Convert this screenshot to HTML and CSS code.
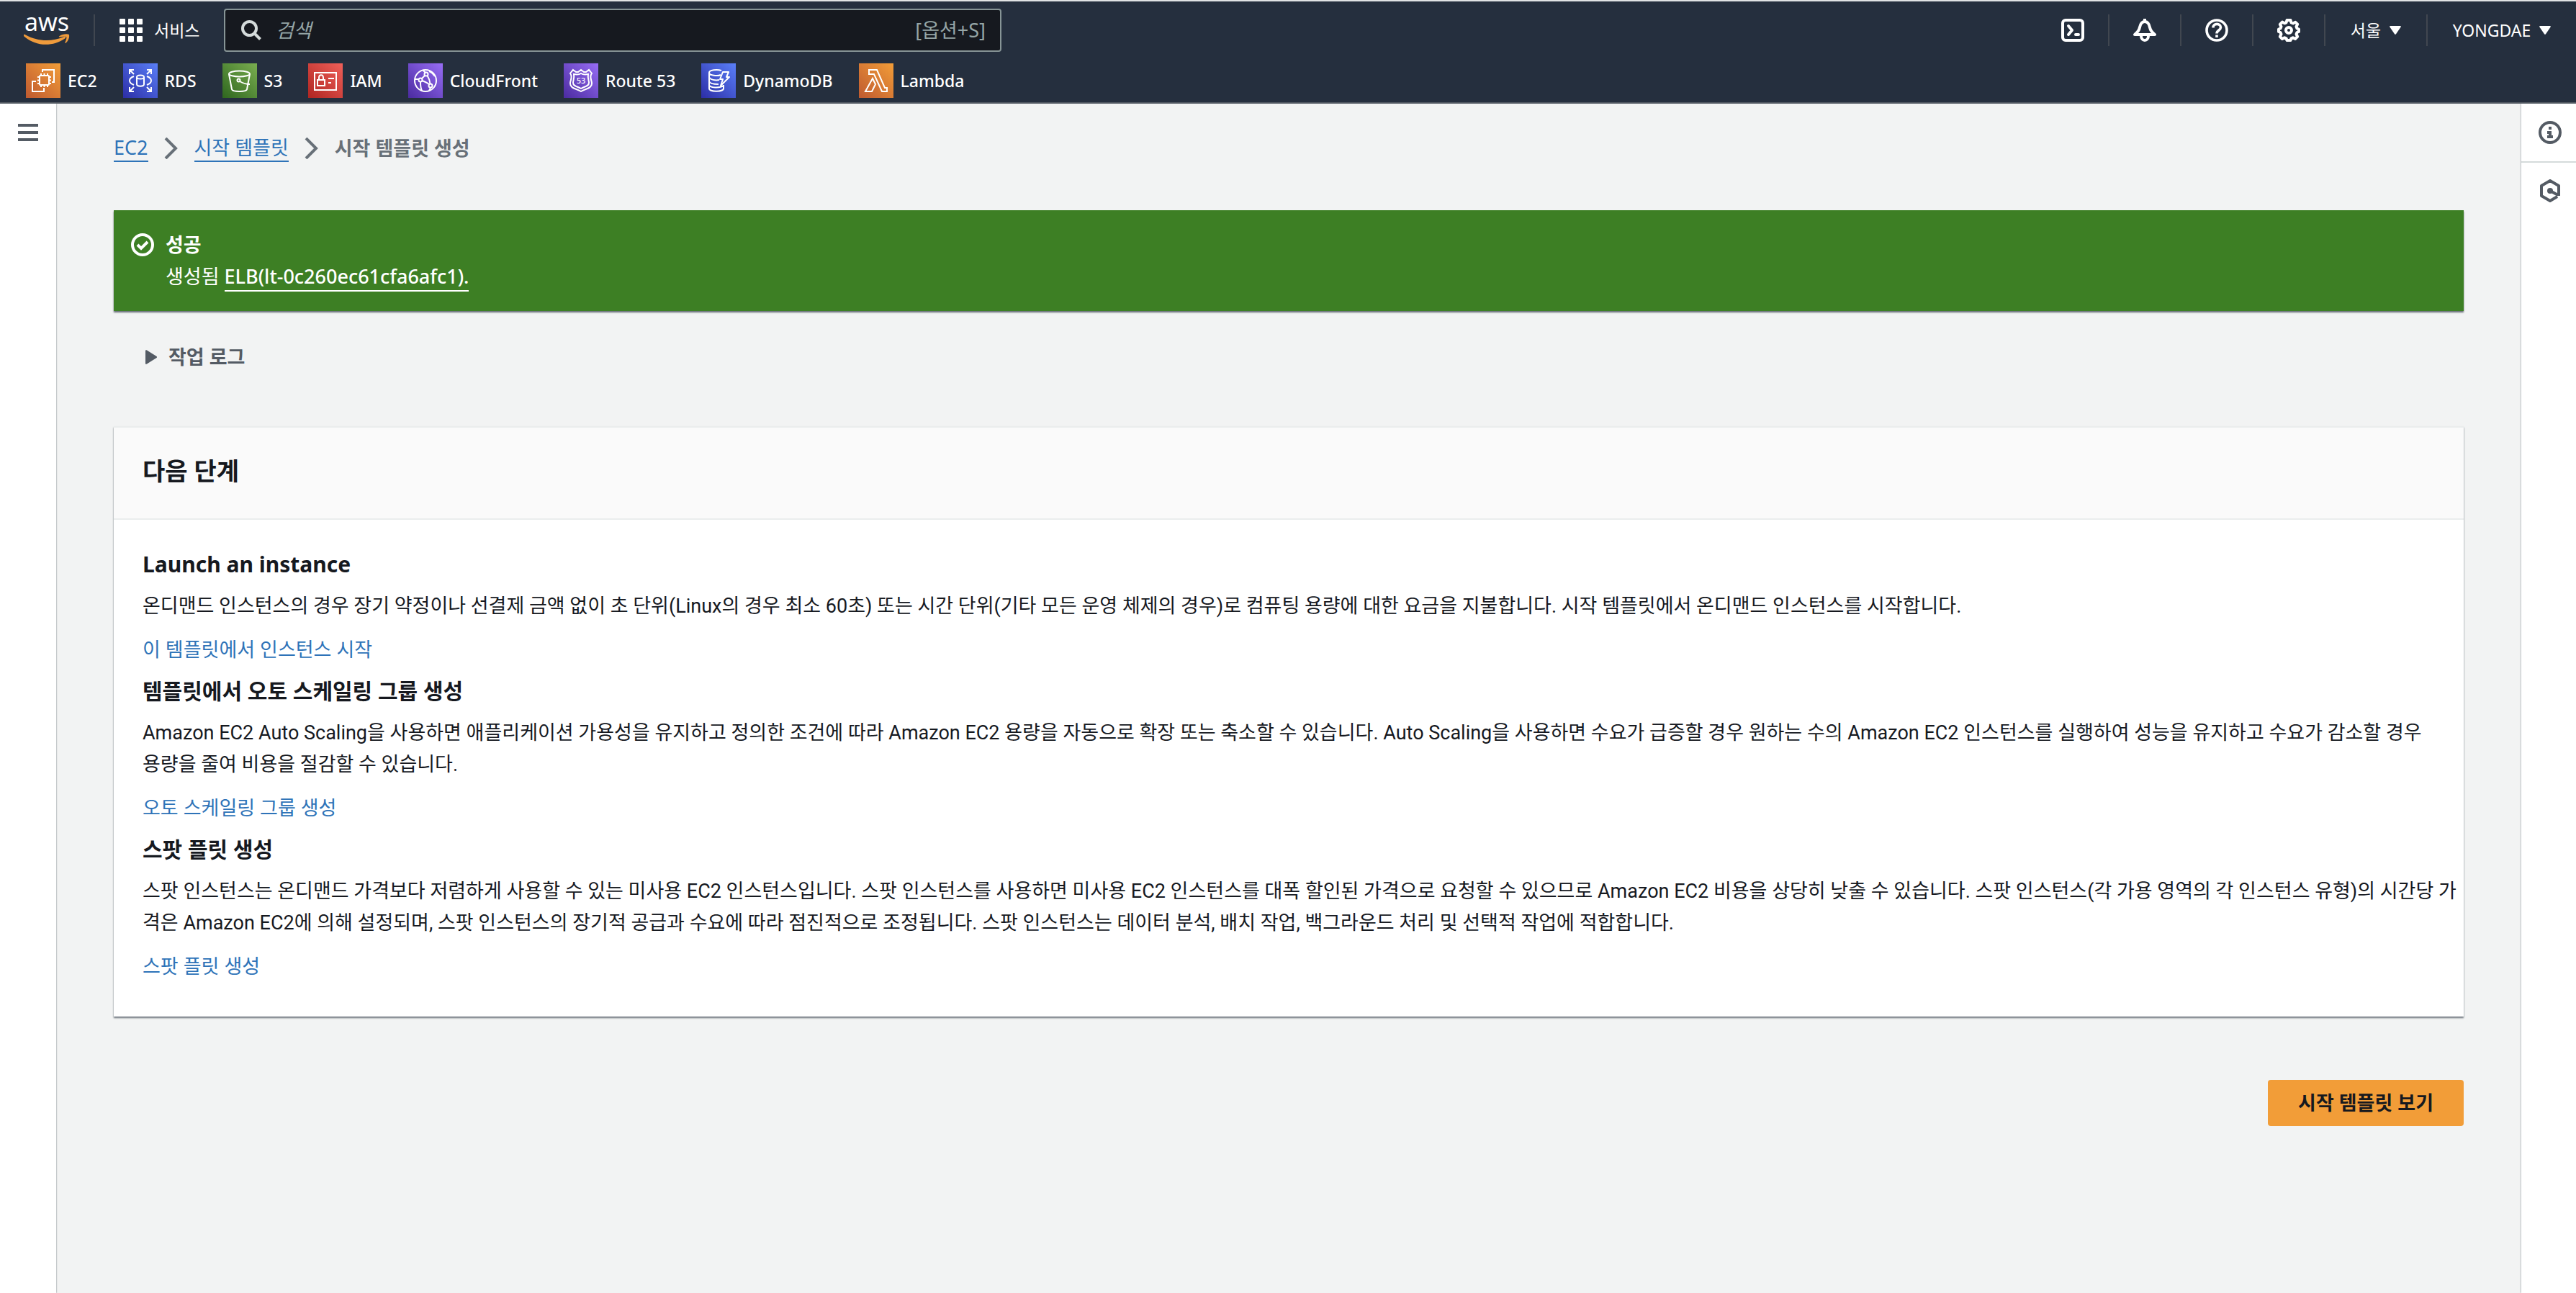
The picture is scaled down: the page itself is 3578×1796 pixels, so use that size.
FILE: index.html
```html
<!DOCTYPE html>
<html lang="ko">
<head>
<meta charset="utf-8">
<meta name="viewport" content="width=device-width, initial-scale=1">
<title>시작 템플릿 생성</title>
<link rel="stylesheet" href="styles.css">
</head>
<body>
<svg class="defs" width="0" height="0" aria-hidden="true">
  <defs>
    <linearGradient id="orange" x1="0" y1="1" x2="1" y2="0"><stop offset="0" stop-color="#bf5a30"/><stop offset="1" stop-color="#f29d38"/></linearGradient>
    <linearGradient id="blue" x1="0" y1="1" x2="1" y2="0"><stop offset="0" stop-color="#2c2ea6"/><stop offset="1" stop-color="#5a7ff8"/></linearGradient>
    <linearGradient id="green" x1="0" y1="1" x2="1" y2="0"><stop offset="0" stop-color="#2f671f"/><stop offset="1" stop-color="#7aae50"/></linearGradient>
    <linearGradient id="red" x1="0" y1="1" x2="1" y2="0"><stop offset="0" stop-color="#af2521"/><stop offset="1" stop-color="#ef6059"/></linearGradient>
    <linearGradient id="purple" x1="0" y1="1" x2="1" y2="0"><stop offset="0" stop-color="#4b2ba0"/><stop offset="1" stop-color="#976df5"/></linearGradient>
  </defs>
</svg>

<header class="topnav">
  <div class="bar">
    <a class="logo" href="#" aria-label="aws">
      <span class="logo-text">aws</span>
      <svg class="logo-smile" viewBox="0 0 64 16" fill="#ef9b3c"><path d="M0 2C0 1 1 .5 2 1.200C19 10.500 38 11.500 56 4c2-.8 3 1 1.500 2.200C40 18.500 17 17.500 1 4 .3 3.500 0 3 0 2z"/><path d="M49 3.500C53 .5 60-.5 62.500.8c1.500 1.200.5 8-3.800 11.800-.8.700-1.700.3-1.300-.7C58.500 9.500 60 5.500 59.200 4.400 58.400 3.300 53.500 3.900 50.500 4.400c-1.500.2-2-.5-1.500-.9z"/></svg>
    </a>
    <button class="services" type="button">
      <svg class="icon" viewBox="0 0 32 32" fill="#fff"><rect width="8" height="8" rx="1"/><rect x="12" width="8" height="8" rx="1"/><rect x="24" width="8" height="8" rx="1"/><rect y="12" width="8" height="8" rx="1"/><rect x="12" y="12" width="8" height="8" rx="1"/><rect x="24" y="12" width="8" height="8" rx="1"/><rect y="24" width="8" height="8" rx="1"/><rect x="12" y="24" width="8" height="8" rx="1"/><rect x="24" y="24" width="8" height="8" rx="1"/></svg>
      <span>서비스</span>
    </button>
    <label class="search">
      <svg class="search-icon" viewBox="0 0 28 28" fill="none" stroke="#d5dbdb" stroke-width="4"><circle cx="11.500" cy="11.500" r="9.500"/><path d="M18 18l8.500 8.500"/></svg>
      <input type="search" placeholder="검색" aria-label="검색">
      <span>[옵션+S]</span>
    </label>
    <div class="tools">
      <button class="tool" type="button" aria-label="CloudShell">
        <svg class="icon" viewBox="0 0 32 32" fill="none" stroke="#fff" stroke-width="4" stroke-linecap="round" stroke-linejoin="round"><rect x="2" y="2" width="28" height="28" rx="4"/><path d="M10 10l5 6-5 6M20 22h4"/></svg>
      </button>
      <button class="tool" type="button" aria-label="알림">
        <svg class="icon" viewBox="0 0 32 32" fill="none" stroke="#fff" stroke-width="4" stroke-linejoin="round"><path d="M16 0v4M2 22c4-3 6-5 7-10 1-5 3-8 7-8s6 3 7 8c1 5 3 7 7 10z"/><path d="M11 24c0 8 10 8 10 0"/></svg>
      </button>
      <button class="tool" type="button" aria-label="도움말">
        <svg class="icon" viewBox="0 0 32 32" fill="none" stroke="#fff" stroke-width="3.600"><circle cx="16" cy="16" r="14"/><path d="M11 12.500c0-7 10.500-6.500 10.500-.5 0 4-5.500 4-5.500 8.500M16 22.500v3.500"/></svg>
      </button>
      <button class="tool" type="button" aria-label="설정">
        <svg class="icon" viewBox="0 0 32 32" fill="none" stroke="#fff" stroke-width="4" stroke-linejoin="round"><path d="M13.500 2h5l1 3.500 2.500 1 3.300-1.700 2.900 2.900L26.500 11l1 2.500 2.500 1v3.500l-2.500 1-1 2.500 1.700 3.300-3.200 3.200-3.200-1.700-2.300 1-1 2.700h-5l-1-2.700-2.300-1L7 28l-3.200-3.200L5.500 21.500l-1-2.500L2 18v-3.500l2.500-1 1-2.500-1.700-3.200L7 4.600l3.200 1.700 2.300-1z"/><circle cx="16" cy="16" r="4"/></svg>
      </button>
      <button class="tool region" type="button"><span>서울</span><svg class="caret" viewBox="0 0 16 12" fill="#fff"><path d="M1 0h14c1 0 1 1 .5 1.800L9 11.200c-.5.800-1.500.8-2 0L.5 1.800C0 1 0 0 1 0z"/></svg></button>
      <button class="tool account" type="button"><span>YONGDAE</span><svg class="caret" viewBox="0 0 16 12" fill="#fff"><path d="M1 0h14c1 0 1 1 .5 1.800L9 11.200c-.5.800-1.500.8-2 0L.5 1.800C0 1 0 0 1 0z"/></svg></button>
    </div>
  </div>
  <nav class="favorites" aria-label="즐겨찾기">
    <a href="#"><svg class="service" viewBox="0 0 48 48"><rect width="48" height="48" fill="url(#orange)"/><g fill="none" stroke="#fff" stroke-width="2"><rect x="19" y="17" width="13" height="13" rx="1"/><path d="M21 17v-3M25.500 17v-3M30 17v-3M21 33v-3M25.500 33v-3M30 33v-3M16 19h3M16 23.500h3M16 28h3M32 19h3M32 23.500h3M32 28h3M23 12V9h16v17h-3M14 25H9v14h16v-5"/></g></svg><span>EC2</span></a>
    <a href="#"><svg class="service" viewBox="0 0 48 48"><rect width="48" height="48" fill="url(#blue)"/><g fill="none" stroke="#fff" stroke-width="2"><ellipse cx="24" cy="19" rx="5" ry="2.500"/><path d="M19 19v10c0 3.500 10 3.500 10 0V19M9 15V9h6M9 9l6 6M33 9h6v6M39 9l-6 6M9 33v6h6M9 39l6-6M33 39h6v-6M39 39l-6-6M15 18c-8 3-8 9 0 12M33 18c8 3 8 9 0 12"/></g></svg><span>RDS</span></a>
    <a href="#"><svg class="service" viewBox="0 0 48 48"><rect width="48" height="48" fill="url(#green)"/><g fill="none" stroke="#fff" stroke-width="2"><ellipse cx="23.500" cy="14.500" rx="14.500" ry="4"/><path d="M9 15l4 21c1 4 20 4 21 0l4-21M24 25c5 3 10 4 14 4"/><circle cx="22.500" cy="23.500" r="2"/></g></svg><span>S3</span></a>
    <a href="#"><svg class="service" viewBox="0 0 48 48"><rect width="48" height="48" fill="url(#red)"/><g fill="none" stroke="#fff" stroke-width="2"><rect x="9" y="13" width="30" height="24"/><rect x="13" y="23" width="10" height="8"/><path d="M15 23v-3c0-5 6-5 6 0v3M28 21h8M28 27h4"/></g></svg><span>IAM</span></a>
    <a href="#"><svg class="service" viewBox="0 0 48 48"><rect width="48" height="48" fill="url(#purple)"/><g fill="none" stroke="#fff" stroke-width="2"><circle cx="24" cy="24" r="15"/><circle cx="25" cy="15" r="2.500"/><circle cx="17" cy="23" r="2.500"/><circle cx="31" cy="31" r="2.500"/><path d="M23 17l-4 4M26.500 17c2 3 3.500 7 4 11.500M19 24c4 1 7 3 10 5M9.500 22h5M17 26c0 4 0 8 2 12M21 10l3 3M31 34l-2 4M29 11c3 1 6 4 8 7"/></g></svg><span>CloudFront</span></a>
    <a href="#"><svg class="service" viewBox="0 0 48 48"><rect width="48" height="48" fill="url(#purple)"/><g fill="none" stroke="#fff" stroke-width="2"><path d="M13 9l4 3h3l4-3 4 3h3l4-3 4 5c-4 5 0 9 0 14 0 7-9 7-15 11-6-4-15-4-15-11 0-5 4-9 0-14z"/><path d="M14 15c5 1 7 1 10-1 3 2 5 2 10 1-1 5 1 9 1 12 0 5-6 5-11 8-5-3-11-3-11-8 0-3 2-7 1-12z"/></g><text class="shield-number" x="24" y="28" text-anchor="middle">53</text></svg><span>Route 53</span></a>
    <a href="#"><svg class="service" viewBox="0 0 48 48"><rect width="48" height="48" fill="url(#blue)"/><g fill="none" stroke="#fff" stroke-width="2" stroke-linejoin="round"><path d="M28 10c-6-2-17-1-17 3 0 4 12 5 16 3M11 13v22c0 5 20 5 20 0v-5M11 19c1 4 9 5 14 4M11 25c1 4 9 4 13 4M11 30c1 4 14 5 20 1M11 13c0 2 2 3 4 3M30 12h8l-3 7h4L27 31l3-9h-4z"/></g></svg><span>DynamoDB</span></a>
    <a href="#"><svg class="service" viewBox="0 0 48 48"><rect width="48" height="48" fill="url(#orange)"/><path d="M14 9h11l11 25h3v5h-7L21 15h-7zM19 21l4 8-5 10H9z" fill="none" stroke="#fff" stroke-width="2"/></svg><span>Lambda</span></a>
  </nav>
</header>

<div class="layout">
  <aside class="rail">
    <button type="button" aria-label="메뉴"><svg class="menu-icon" viewBox="0 0 28 24" fill="#545b64"><path d="M0 0h28v4H0zM0 10h28v4H0zM0 20h28v4H0z"/></svg></button>
  </aside>

  <main class="content">
    <nav class="breadcrumb" aria-label="위치">
      <a href="#">EC2</a>
      <svg class="chevron" viewBox="0 0 20 30" fill="none" stroke="#687078" stroke-width="4"><path d="M2 1l14 14L2 29"/></svg>
      <a href="#">시작 템플릿</a>
      <svg class="chevron" viewBox="0 0 20 30" fill="none" stroke="#687078" stroke-width="4"><path d="M2 1l14 14L2 29"/></svg>
      <strong>시작 템플릿 생성</strong>
    </nav>

    <section class="alert" role="status">
      <svg class="icon" viewBox="0 0 32 32" fill="none" stroke="#fff" stroke-width="4"><circle cx="16" cy="16" r="14"/><path d="M9 16l5 5 9-9"/></svg>
      <div>
        <strong>성공</strong>
        <p>생성됨 <a href="#">ELB(lt-0c260ec61cfa6afc1).</a></p>
      </div>
    </section>

    <button class="log-toggle" type="button" aria-expanded="false">
      <svg class="triangle" viewBox="0 0 16 20" fill="#545b64"><path d="M0 1c0-1 1-1 2-.5L15.500 9c.7.600.7 1.400 0 2L2 19.500c-1 .5-2 .5-2-.5z"/></svg>
      <span>작업 로그</span>
    </button>

    <section class="card">
      <h1>다음 단계</h1>
      <div class="card-body">
        <h2>Launch an instance</h2>
        <p>온디맨드 인스턴스의 경우 장기 약정이나 선결제 금액 없이 초 단위(Linux의 경우 최소 60초) 또는 시간 단위(기타 모든 운영 체제의 경우)로 컴퓨팅 용량에 대한 요금을 지불합니다. 시작 템플릿에서 온디맨드 인스턴스를 시작합니다.</p>
        <a href="#">이 템플릿에서 인스턴스 시작</a>
        <h2>템플릿에서 오토 스케일링 그룹 생성</h2>
        <p>Amazon EC2 Auto Scaling을 사용하면 애플리케이션 가용성을 유지하고 정의한 조건에 따라 Amazon EC2 용량을 자동으로 확장 또는 축소할 수 있습니다. Auto Scaling을 사용하면 수요가 급증할 경우 원하는 수의 Amazon EC2 인스턴스를 실행하여 성능을 유지하고 수요가 감소할 경우<br>용량을 줄여 비용을 절감할 수 있습니다.</p>
        <a href="#">오토 스케일링 그룹 생성</a>
        <h2>스팟 플릿 생성</h2>
        <p>스팟 인스턴스는 온디맨드 가격보다 저렴하게 사용할 수 있는 미사용 EC2 인스턴스입니다. 스팟 인스턴스를 사용하면 미사용 EC2 인스턴스를 대폭 할인된 가격으로 요청할 수 있으므로 Amazon EC2 비용을 상당히 낮출 수 있습니다. 스팟 인스턴스(각 가용 영역의 각 인스턴스 유형)의 시간당 가<br>격은 Amazon EC2에 의해 설정되며, 스팟 인스턴스의 장기적 공급과 수요에 따라 점진적으로 조정됩니다. 스팟 인스턴스는 데이터 분석, 배치 작업, 백그라운드 처리 및 선택적 작업에 적합합니다.</p>
        <a href="#">스팟 플릿 생성</a>
      </div>
    </section>

    <button class="primary" type="button">시작 템플릿 보기</button>
  </main>

  <aside class="rail rail-right">
    <button type="button" aria-label="정보"><svg class="icon" viewBox="0 0 32 32" fill="none" stroke="#545b64" stroke-width="4"><circle cx="16" cy="16" r="14"/><path d="M16 8v4M12 16h4v8M12 22h8"/></svg></button>
    <button type="button" aria-label="진단"><svg class="icon" viewBox="0 0 32 32" fill="none" stroke="#545b64" stroke-width="4" stroke-linejoin="round"><path d="M28 23V9L16 2 4 9v14l12 7 10-6"/><circle cx="16" cy="16" r="4" fill="#545b64" stroke="none"/><path d="M16 16l11 6"/></svg></button>
  </aside>
</div>
</body>
</html>
```

FILE: styles.css
```css
* {
  box-sizing: border-box;
}

body {
  margin: 0;
  background: #f2f3f3;
  color: #16191f;
  font-family: "Noto Sans", "Noto Sans CJK KR", sans-serif;
  font-size: 27px;
  line-height: 44px;
}

button,
input {
  padding: 0;
  border: 0;
  background: none;
  color: inherit;
  font: inherit;
}

a {
  color: #2e73b8;
  text-decoration: none;
}

svg {
  display: block;
  flex: none;
}

p,
h1,
h2 {
  margin: 0;
}

.defs {
  position: absolute;
}

.icon {
  width: 32px;
  height: 32px;
}

/* Top navigation */

.topnav {
  border-top: 2px solid #e1e3e4;
  border-bottom: 2px solid #545b64;
  background: #252f3e;
  color: #fff;
  font-size: 23px;
}

.bar {
  display: flex;
  align-items: center;
  height: 80px;
}

.logo {
  display: flex;
  flex-direction: column;
  align-items: center;
  width: 132px;
  height: 44px;
  border-right: 2px solid #414750;
  color: #fff;
}

.logo-text {
  height: 27px;
  font-size: 34px;
  line-height: 20px;
}

.logo-smile {
  width: 64px;
  height: 16px;
}

.services {
  display: flex;
  align-items: center;
  gap: 16px;
  width: 179px;
  padding-left: 34px;
}

.search {
  display: flex;
  align-items: center;
  gap: 20px;
  width: 1080px;
  height: 60px;
  padding: 0 20px 0 22px;
  border: 2px solid #879596;
  border-radius: 4px;
  background: #16191f;
  color: #95a5a6;
  font-size: 27px;
}

.search-icon {
  width: 28px;
  height: 28px;
}

.search input {
  flex: 1;
  min-width: 0;
}

.search input::placeholder {
  color: #95a5a6;
  font-style: italic;
  opacity: 1;
}

.tools {
  display: flex;
  margin-left: auto;
}

.tool {
  display: flex;
  align-items: center;
  justify-content: center;
  gap: 12px;
  width: 100px;
  height: 44px;
  border-right: 2px solid #414750;
}

.tool.region {
  width: 142px;
}

.tool.account {
  width: 206px;
  border-right: 0;
}

.caret {
  width: 16px;
  height: 12px;
}

.favorites {
  display: flex;
  align-items: center;
  gap: 36px;
  height: 60px;
  padding-left: 36px;
  font-weight: 500;
}

.favorites a {
  display: flex;
  align-items: center;
  gap: 10px;
  color: #fff;
}

.service {
  width: 48px;
  height: 48px;
}

.shield-number {
  fill: #fff;
  font-size: 11px;
}

/* Page frame */

.layout {
  display: flex;
  min-height: calc(100vh - 144px);
}

.rail {
  flex: none;
  width: 78px;
  background: #fff;
  box-shadow: 0 0 2px #687078;
}

.rail button {
  display: flex;
  align-items: center;
  justify-content: center;
  width: 100%;
  height: 80px;
}

.rail-right {
  width: 76px;
}

.rail-right button {
  padding-left: 4px;
}

.rail-right button + button {
  border-top: 2px solid #d5dbdb;
}

.menu-icon {
  width: 28px;
  height: 24px;
}

.content {
  display: flex;
  flex: 1;
  flex-direction: column;
  min-width: 0;
  padding: 44px 80px;
}

/* Breadcrumb */

.breadcrumb {
  display: flex;
  align-items: center;
  gap: 22px;
  height: 36px;
  line-height: 36px;
}

.breadcrumb a {
  border-bottom: 2px solid #2e73b8;
}

.breadcrumb strong {
  color: #687078;
}

.chevron {
  width: 20px;
  height: 30px;
}

/* Success message */

.alert {
  display: flex;
  gap: 16px;
  margin-top: 68px;
  padding: 26px 24px;
  background: #3d7f24;
  color: #fff;
  box-shadow: 0 2px 2px #687078;
}

.alert .icon {
  margin-top: 6px;
}

.alert a {
  display: inline-block;
  border-bottom: 2px solid #fff;
  color: #fff;
  font-weight: 500;
  line-height: 38px;
}

.log-toggle {
  display: flex;
  align-items: center;
  align-self: flex-start;
  gap: 16px;
  margin: 42px 0 0 44px;
  color: #545b64;
  font-weight: 700;
}

.triangle {
  width: 16px;
  height: 20px;
}

/* Next steps */

.card {
  margin-top: 74px;
  border-top: 2px solid #eaeded;
  background: #fff;
  box-shadow: 0 2px 2px #687078;
}

.card h1 {
  padding: 38px 40px 44px;
  border-bottom: 2px solid #eaeded;
  background: #fafafa;
  font-size: 34px;
  line-height: 44px;
}

.card-body {
  padding: 40px 4px 48px 40px;
}

.card h2 {
  font-size: 30px;
  line-height: 44px;
}

.card p {
  margin: 14px 0 16px;
  font-family: Roboto, "Noto Sans CJK KR", sans-serif;
}

.card-body a {
  display: block;
  width: max-content;
  margin-bottom: 14px;
}

.card-body a:last-child {
  margin-bottom: 0;
}

.primary {
  align-self: flex-end;
  height: 64px;
  margin-top: 88px;
  padding: 0 42px;
  border-radius: 4px;
  background: #f29d38;
  font-weight: 700;
}
```
